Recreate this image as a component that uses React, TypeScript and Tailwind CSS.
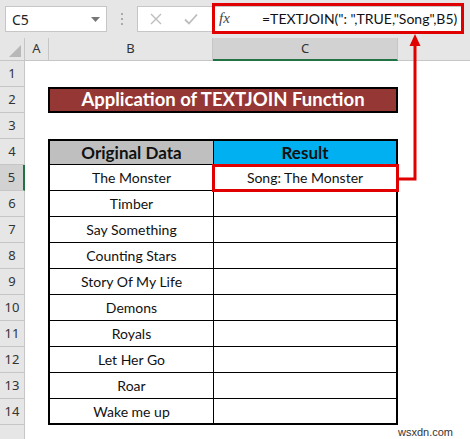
import React from "react";

const songs = [
  "The Monster",
  "Timber",
  "Say Something",
  "Counting Stars",
  "Story Of My Life",
  "Demons",
  "Royals",
  "Let Her Go",
  "Roar",
  "Wake me up",
];

export default function App() {
  const rows = Array.from({ length: 14 }, (_, i) => i + 1);
  return (
    <div
      className="relative w-[470px] h-[439px] overflow-hidden bg-white"
      style={{ fontFamily: "Lato, 'Noto Sans', sans-serif" }}
    >
      {/* Toolbar */}
      <div className="h-[38px] bg-[#e6e6e6] flex items-start pt-[6px] pl-[5px]">
        <div className="w-[102px] h-[26px] bg-white border border-[#c6c6c6] flex items-center justify-between pl-[6px] pr-[6px]">
          <span className="text-[14px] text-[#222]" style={{ fontFamily: "'Noto Sans', sans-serif" }}>C5</span>
          <svg width="9" height="5" viewBox="0 0 9 5"><path d="M0 0h9L4.5 5z" fill="#777" /></svg>
        </div>
        <div className="w-[30px] h-[26px] flex flex-col items-center justify-center gap-[3px]">
          <span className="w-[2px] h-[2px] bg-[#aaa]" />
          <span className="w-[2px] h-[2px] bg-[#aaa]" />
          <span className="w-[2px] h-[2px] bg-[#aaa]" />
        </div>
        <div className="w-[326px] h-[26px] bg-white border border-[#c6c6c6] flex items-center">
          <div className="w-[75px] flex items-center">
            <svg className="ml-[12px]" width="12" height="12" viewBox="0 0 12 12"><path d="M1 1l10 10M11 1L1 11" stroke="#bdbdbd" strokeWidth="1.4" /></svg>
            <svg className="ml-[22px]" width="14" height="12" viewBox="0 0 14 12"><path d="M1 6.5l4 4L13 1.5" stroke="#bdbdbd" strokeWidth="1.8" fill="none" /></svg>
          </div>
        </div>
      </div>
      {/* Red box around fx + formula */}
      <div className="absolute left-[212px] top-[3px] w-[252px] h-[31px] border-[3px] border-[#e00000] flex items-center">
        <span className="ml-[4px] w-[18px] text-[15px] italic text-[#444]" style={{ fontFamily: "'Liberation Serif', serif" }}>fx</span>
        <span className="ml-[25px] text-[14px] text-[#111] whitespace-nowrap">=TEXTJOIN(": ",TRUE,"Song",B5)</span>
      </div>

      {/* Column headers */}
      <div className="flex h-[23px] bg-[#e6e6e6] text-[13px] text-[#333]" style={{ fontFamily: "'Noto Sans', sans-serif" }}>
        <div className="w-[25px] border-r border-b border-[#c6c6c6] relative">
          <svg className="absolute right-[3px] bottom-[3px]" width="12" height="12" viewBox="0 0 12 12"><path d="M12 0v12H0z" fill="#b8b8b8" /></svg>
        </div>
        <div className="w-[24px] border-r border-b border-[#c6c6c6] flex items-center justify-center">A</div>
        <div className="w-[164px] border-r border-b border-[#c6c6c6] flex items-center justify-center">B</div>
        <div className="w-[185px] bg-[#d2d2d2] border-r border-[#c6c6c6] border-b-2 border-b-[#217346] flex items-center justify-center">C</div>
        <div className="flex-1 border-b border-[#c6c6c6]" />
      </div>

      {/* Sheet body */}
      <div className="flex">
        <div className="w-[25px] shrink-0 text-[13px] text-[#333]" style={{ fontFamily: "'Noto Sans', sans-serif" }}>
          {rows.map((r) => (
            <div
              key={r}
              className={
                r === 5
                  ? "h-[26px] bg-[#d2d2d2] border-b border-[#c6c6c6] border-r-2 border-r-[#217346] flex items-center justify-center"
                  : "h-[26px] bg-[#e6e6e6] border-b border-r border-[#c6c6c6] flex items-center justify-center"
              }
            >
              {r}
            </div>
          ))}
          <div className="h-[20px] bg-[#e6e6e6] border-r border-[#c6c6c6]" />
        </div>
        <div className="flex-1 pl-[23px]">
          <div className="h-[26px]" />
          <div className="w-[350px] h-[26px] border-2 border-black bg-[#953735] flex items-center justify-center text-white font-bold text-[18.5px]">
            Application of TEXTJOIN Function
          </div>
          <div className="h-[26px]" />
          <div className="w-[350px] border-2 border-black text-[14px] text-[#111]">
            <div className="flex h-[24px] border-b border-black font-bold text-[17px]">
              <div className="w-[164px] bg-[#bfbfbf] border-r border-black flex items-center justify-center">Original Data</div>
              <div className="flex-1 bg-[#00b0f0] flex items-center justify-center">Result</div>
            </div>
            {songs.map((s, i) => (
              <div key={s} className={i === songs.length - 1 ? "flex h-[24px]" : "flex h-[26px] border-b border-black"}>
                <div className="w-[164px] border-r border-black flex items-center justify-center">{s}</div>
                <div className="flex-1 flex items-center justify-center">{i === 0 ? "Song: The Monster" : ""}</div>
              </div>
            ))}
          </div>
        </div>
      </div>

      {/* Red box around C5 */}
      <div className="absolute left-[212px] top-[164px] w-[187px] h-[28px] border-[3px] border-[#e00000]" />
      {/* Arrow */}
      <svg className="absolute left-0 top-0" width="470" height="439" viewBox="0 0 470 439">
        <path d="M399 179H415V44" stroke="#e00000" strokeWidth="3" fill="none" />
        <path d="M415 34L409.5 46H420.5Z" fill="#e00000" />
      </svg>

      <div className="absolute left-[398px] top-[424px] text-[11px] text-[#333]" style={{ fontFamily: "'Liberation Sans', sans-serif" }}>
        wsxdn.com
      </div>
    </div>
  );
}
